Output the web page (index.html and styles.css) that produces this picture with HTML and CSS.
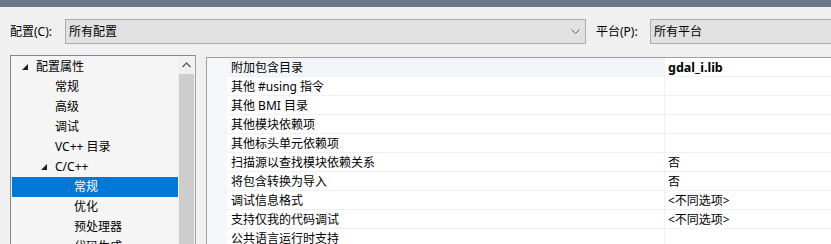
FILE: index.html
```html
<!DOCTYPE html>
<html lang="zh-CN">
<head>
<meta charset="utf-8">
<title>属性页</title>
<link rel="stylesheet" href="styles.css">
</head>
<body>
<div class="titlebar"></div>
<div class="toolbar">
  <span class="label label-config">配置(C):</span>
  <div class="combo combo-config">
    <span class="combo-text">所有配置</span>
    <svg class="chevron" width="9" height="6" viewBox="0 0 9 6"><polyline points="0.5,0.5 4.5,4.5 8.5,0.5" fill="none" stroke="#606060" stroke-width="1"/></svg>
  </div>
  <span class="label label-platform">平台(P):</span>
  <div class="combo combo-platform">
    <span class="combo-text">所有平台</span>
  </div>
</div>
<div class="main">
  <div class="tree">
    <div class="tree-list">
      <div class="node lvl0"><span class="tri"></span>配置属性</div>
      <div class="node lvl1">常规</div>
      <div class="node lvl1">高级</div>
      <div class="node lvl1">调试</div>
      <div class="node lvl1">VC++ 目录</div>
      <div class="node lvl1b"><span class="tri"></span>C/C++</div>
      <div class="node lvl2 selected">常规</div>
      <div class="node lvl2">优化</div>
      <div class="node lvl2">预处理器</div>
      <div class="node lvl2">代码生成</div>
    </div>
    <div class="scrollbar">
      <div class="scroll-btn">
        <svg width="9" height="6" viewBox="0 0 9 6"><polyline points="0.5,5 4.5,1 8.5,5" fill="none" stroke="#606060" stroke-width="1.4"/></svg>
      </div>
      <div class="scroll-thumb"></div>
    </div>
  </div>
  <div class="grid">
    <div class="row current"><div class="gutter"></div><div class="name">附加包含目录</div><div class="value bold">gdal_i.lib</div></div>
    <div class="row"><div class="gutter"></div><div class="name">其他 #using 指令</div><div class="value"></div></div>
    <div class="row"><div class="gutter"></div><div class="name">其他 BMI 目录</div><div class="value"></div></div>
    <div class="row"><div class="gutter"></div><div class="name">其他模块依赖项</div><div class="value"></div></div>
    <div class="row"><div class="gutter"></div><div class="name">其他标头单元依赖项</div><div class="value"></div></div>
    <div class="row"><div class="gutter"></div><div class="name">扫描源以查找模块依赖关系</div><div class="value">否</div></div>
    <div class="row"><div class="gutter"></div><div class="name">将包含转换为导入</div><div class="value">否</div></div>
    <div class="row"><div class="gutter"></div><div class="name">调试信息格式</div><div class="value">&lt;不同选项&gt;</div></div>
    <div class="row"><div class="gutter"></div><div class="name">支持仅我的代码调试</div><div class="value">&lt;不同选项&gt;</div></div>
    <div class="row"><div class="gutter"></div><div class="name">公共语言运行时支持</div><div class="value"></div></div>
  </div>
</div>
</body>
</html>
```

FILE: styles.css
```css
* { box-sizing: border-box; }
html, body {
  margin: 0;
  padding: 0;
  width: 831px;
  height: 244px;
  overflow: hidden;
  background: #f0f0f0;
}
body {
  font-family: "Noto Sans", "Noto Sans CJK SC", sans-serif;
  font-size: 12px;
  color: #000;
}
.titlebar {
  height: 7px;
  background: #687789;
}
.toolbar {
  display: flex;
  align-items: center;
  height: 25px;
  margin-top: 12px;
  padding-left: 10px;
  white-space: nowrap;
}
.label { line-height: 25px; flex: none; }
.label-config { width: 55px; }
.label-platform { margin-left: 10px; width: 54px; }
.combo {
  height: 25px;
  background: #e1e1e1;
  border: 1px solid #adadad;
  display: flex;
  align-items: center;
  padding-left: 3px;
  flex: none;
}
.combo-config { width: 521px; }
.combo-platform { width: 200px; }
.combo-text { line-height: 23px; }
.chevron {
  margin-left: auto;
  margin-right: 5px;
  margin-top: 1px;
}
.main {
  display: flex;
  align-items: flex-start;
  margin-top: 11px;
  padding-left: 10px;
}
.tree {
  width: 186px;
  height: 200px;
  flex: none;
  border: 1px solid #828790;
  border-bottom: none;
  border-right-color: #a0a0a0;
  background: #f5f5f5;
  display: flex;
  padding: 1px 0 0 1px;
}
.tree-list {
  width: 166px;
  flex: none;
}
.node {
  height: 20px;
  line-height: 20px;
  white-space: nowrap;
  position: relative;
}
.lvl0 { padding-left: 24px; }
.lvl1 { padding-left: 43px; }
.lvl1b { padding-left: 43px; }
.lvl2 { padding-left: 62px; }
.selected {
  background: #0078d7;
  color: #fff;
}
.tri {
  position: absolute;
  top: 7px;
  width: 0;
  height: 0;
  border-left: 6px solid transparent;
  border-bottom: 6px solid #1e1e1e;
}
.lvl0 .tri { left: 10px; }
.lvl1b .tri { left: 29px; }
.scrollbar {
  width: 17px;
  flex: none;
  background: #f0f0f0;
  display: flex;
  flex-direction: column;
  align-items: stretch;
}
.scroll-btn {
  height: 17px;
  display: flex;
  align-items: center;
  justify-content: center;
  padding-bottom: 2px;
}
.scroll-thumb {
  margin-left: 1px;
  width: 15px;
  height: 180px;
  background: #cdcdcd;
}
.grid {
  margin-left: 10px;
  margin-top: 2px;
  width: 700px;
  flex: none;
  border-left: 1px solid #a0a0a0;
  border-top: 1px solid #a0a0a0;
  background: #fff;
}
.row {
  display: flex;
  height: 19px;
  white-space: nowrap;
}
.gutter {
  width: 20px;
  flex: none;
  background: #f5f7fb;
}
.name {
  width: 438px;
  flex: none;
  padding-left: 4px;
  padding-top: 1px;
  line-height: 17px;
  border-bottom: 1px solid #eef1f5;
  border-right: 1px solid #eef1f5;
}
.value {
  flex: 1;
  padding-left: 3px;
  padding-top: 1px;
  line-height: 17px;
  border-bottom: 1px solid #eef1f5;
}
.current .name { background: #f2f6fb; }
.bold {
  font-weight: bold;
  font-size: 12.5px;
}
```
